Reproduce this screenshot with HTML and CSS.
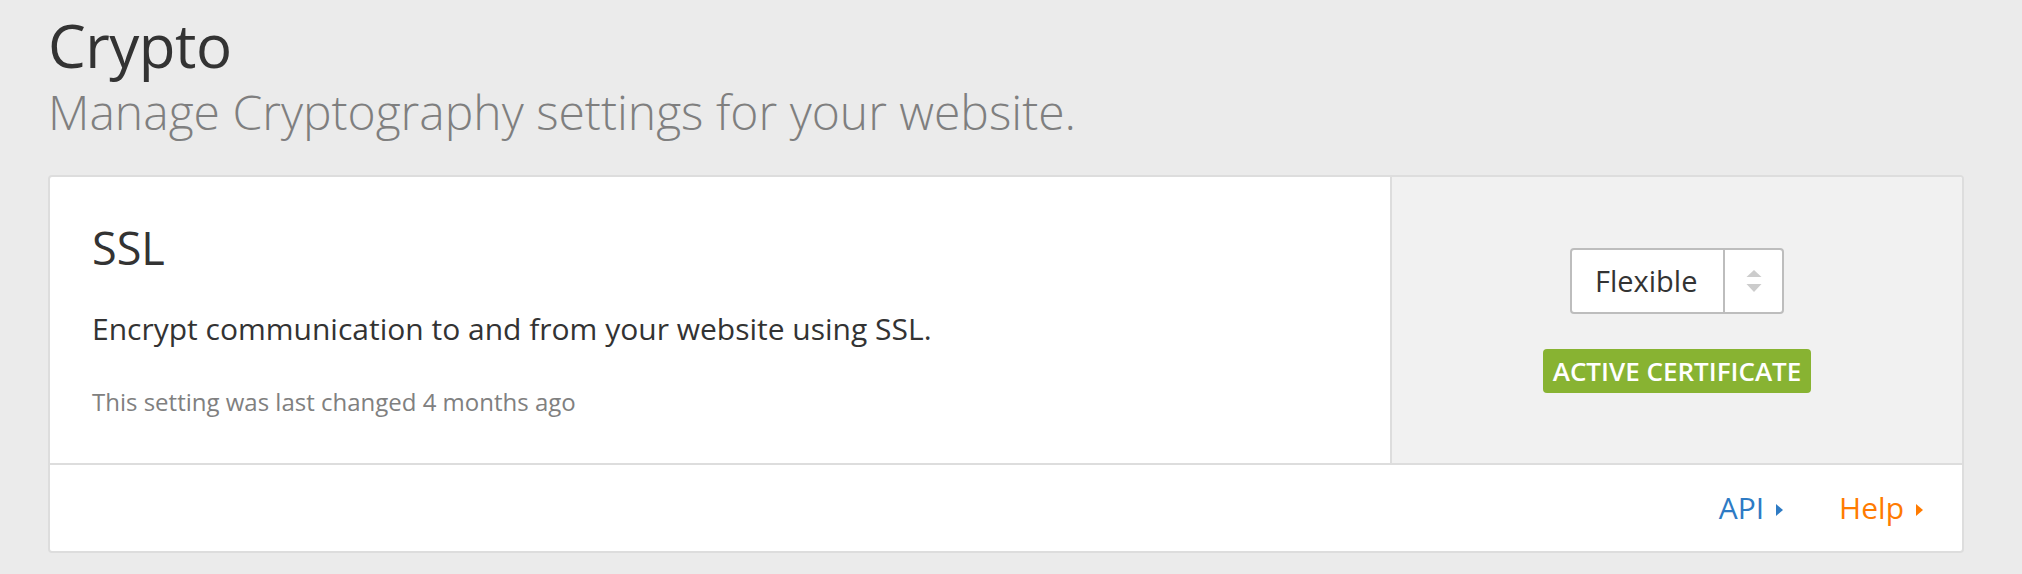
FILE: index.html
```html
<!DOCTYPE html>
<html lang="en">
<head>
<meta charset="utf-8">
<title>Crypto</title>
<link rel="stylesheet" href="styles.css">
</head>
<body>
<main class="page">
  <header class="page-header">
    <h1 class="page-title">Crypto</h1>
    <p class="page-subtitle">Manage Cryptography settings for your website.</p>
  </header>
  <section class="card">
    <div class="card-body">
      <div class="card-main">
        <h2 class="card-title">SSL</h2>
        <p class="card-desc">Encrypt communication to and from your website using SSL.</p>
        <p class="card-meta">This setting was last changed 4 months ago</p>
      </div>
      <div class="card-side">
        <div class="select">
          <span class="select-value">Flexible</span>
          <span class="select-arrows">
            <svg width="16" height="24" viewBox="0 0 16 24" aria-hidden="true">
              <polygon points="8,1 15.5,8 0.5,8" fill="#cccccc"/>
              <polygon points="0.5,15 15.5,15 8,23" fill="#cccccc"/>
            </svg>
          </span>
        </div>
        <span class="badge">ACTIVE CERTIFICATE</span>
      </div>
    </div>
    <div class="card-footer">
      <a class="link link-api" href="#">API<span class="caret"></span></a>
      <a class="link link-help" href="#">Help<span class="caret"></span></a>
    </div>
  </section>
</main>
</body>
</html>
```

FILE: styles.css
```css
html, body {
  margin: 0;
  padding: 0;
}
body {
  background: #ebebeb;
  font-family: "Open Sans", "Noto Sans", "Liberation Sans", sans-serif;
  color: #333333;
}
.page {
  padding: 9px 58px 0 48px;
}
.page-header {
  margin: 0 0 35px 0;
}
.page-title {
  margin: 0;
  font-size: 60px;
  font-weight: 400;
  line-height: 72px;
  color: #333333;
  letter-spacing: -0.5px;
}
.page-subtitle {
  margin: 2px 0 0 0;
  font-size: 48px;
  font-weight: 300;
  line-height: 57px;
  color: #7f7f7f;
}
.card {
  background: #ffffff;
  border: 2px solid #dddddd;
  border-radius: 4px;
  overflow: hidden;
}
.card-body {
  display: flex;
  border-bottom: 2px solid #dddddd;
  height: 286px;
}
.card-main {
  flex: 1;
  padding: 44px 42px 0 42px;
}
.card-title {
  margin: 0;
  font-size: 45px;
  font-weight: 400;
  line-height: 54px;
  color: #333333;
}
.card-desc {
  margin: 36px 0 0 0;
  font-size: 30px;
  line-height: 36px;
  color: #333333;
}
.card-meta {
  margin: 41px 0 0 0;
  font-size: 24px;
  line-height: 28px;
  color: #808080;
}
.card-side {
  width: 570px;
  border-left: 2px solid #dddddd;
  background: #f1f1f1;
  display: flex;
  flex-direction: column;
  align-items: center;
  justify-content: center;
  gap: 35px;
}
.select {
  display: flex;
  width: 214px;
  height: 66px;
  box-sizing: border-box;
  border: 2px solid #bdbdbd;
  border-radius: 4px;
  background: #ffffff;
}
.select-value {
  flex: 1;
  display: flex;
  align-items: center;
  padding-left: 23px;
  font-size: 29px;
  color: #333333;
}
.select-arrows {
  width: 57px;
  border-left: 2px solid #bdbdbd;
  display: flex;
  align-items: center;
  justify-content: center;
}
.badge {
  display: inline-block;
  background: #88b332;
  color: #ffffff;
  border-radius: 4px;
  font-size: 26px;
  font-weight: 600;
  line-height: 44px;
  height: 44px;
  padding: 0 10px;
}
.card-footer {
  height: 86px;
  display: flex;
  align-items: center;
  justify-content: flex-end;
  padding-right: 39px;
  gap: 56px;
}
.link {
  display: inline-flex;
  align-items: center;
  font-size: 30px;
  line-height: 36px;
  text-decoration: none;
}
.link-api {
  color: #2e7bc4;
}
.link-help {
  color: #ff7b00;
}
.caret {
  display: inline-block;
  width: 0;
  height: 0;
  margin-left: 12px;
  margin-top: 3px;
  border-top: 6px solid transparent;
  border-bottom: 6px solid transparent;
  border-left: 7px solid currentColor;
}
```
